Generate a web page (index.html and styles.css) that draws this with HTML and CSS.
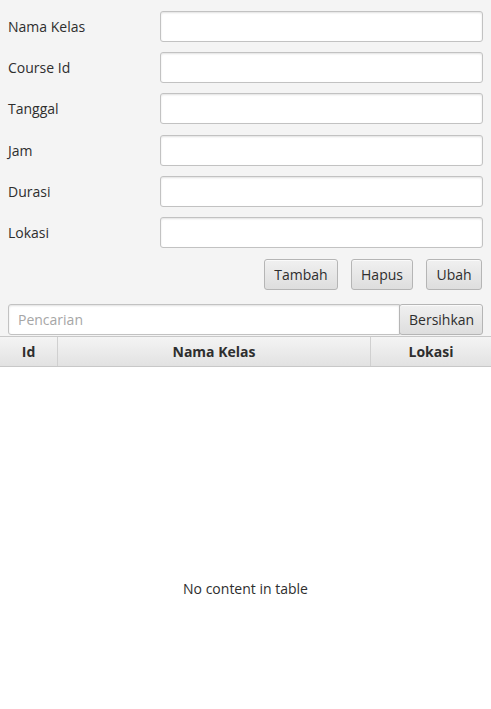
FILE: index.html
```html
<!DOCTYPE html>
<html>
<head>
<meta charset="utf-8">
<link rel="stylesheet" href="styles.css">
</head>
<body>
<div class="app">
  <div class="form">
    <label class="lbl">Nama Kelas</label><input class="field" type="text">
    <label class="lbl">Course Id</label><input class="field" type="text">
    <label class="lbl">Tanggal</label><input class="field" type="text">
    <label class="lbl">Jam</label><input class="field" type="text">
    <label class="lbl">Durasi</label><input class="field" type="text">
    <label class="lbl">Lokasi</label><input class="field" type="text">
  </div>
  <div class="actions">
    <button class="btn btn-tambah">Tambah</button>
    <button class="btn btn-hapus">Hapus</button>
    <button class="btn btn-ubah">Ubah</button>
  </div>
  <div class="search">
    <input class="field search-field" type="text" placeholder="Pencarian">
    <button class="btn btn-clear">Bersihkan</button>
  </div>
  <div class="table">
    <div class="thead">
      <div class="th th-id">Id</div>
      <div class="th th-nama">Nama Kelas</div>
      <div class="th th-lokasi">Lokasi</div>
    </div>
    <div class="tbody">
      <div class="empty">No content in table</div>
    </div>
  </div>
</div>
</body>
</html>
```
FILE: styles.css
```css
html, body {
  margin: 0;
  padding: 0;
  height: 100%;
}
body {
  background: #f4f4f4;
  font-family: "Open Sans", "Noto Sans", sans-serif;
  font-size: 14px;
  color: #2e2e2e;
}
.app {
  display: flex;
  flex-direction: column;
  height: 100%;
}
.form {
  display: grid;
  grid-template-columns: 152px 1fr;
  grid-auto-rows: 31px;
  row-gap: 10.2px;
  padding: 11px 8px 0 8px;
}
.lbl {
  display: flex;
  align-items: center;
  color: #2e2e2e;
}
.field {
  box-sizing: border-box;
  height: 31px;
  margin: 0;
  border: 1px solid #c2c2c2;
  border-radius: 3px;
  background: #fff;
  box-shadow: inset 0 1px 2px rgba(0,0,0,0.12);
  font-family: inherit;
  font-size: 14px;
  color: #2e2e2e;
  padding: 0 9px;
  outline: none;
}
.field::placeholder {
  color: #a6a6a6;
}
.actions {
  display: flex;
  justify-content: flex-end;
  gap: 13px;
  padding: 11px 9px 0 8px;
}
.btn {
  box-sizing: border-box;
  height: 31px;
  margin: 0;
  border: 1px solid #b5b5b5;
  border-radius: 3px;
  background: linear-gradient(#f0f0f0, #dedede);
  box-shadow: inset 0 1px 0 #fafafa;
  font-family: inherit;
  font-size: 14px;
  color: #2e2e2e;
  padding: 0 9px;
}
.btn-tambah { width: 74px; }
.btn-hapus { width: 62px; }
.btn-ubah { width: 56px; }
.search {
  display: flex;
  padding: 14px 8px 1px 8px;
}
.search-field {
  flex: 1;
  border-radius: 3px 0 0 3px;
}
.btn-clear {
  width: 84px;
  margin-left: -1px;
}
.table {
  flex: 1;
  display: flex;
  flex-direction: column;
  background: #fff;
}
.thead {
  display: grid;
  grid-template-columns: 58px 313px 1fr;
  height: 31px;
  background: linear-gradient(#f4f4f4, #e2e2e2);
  border-top: 1px solid #c8c8c8;
  border-bottom: 1px solid #c8c8c8;
  box-sizing: border-box;
}
.th {
  display: flex;
  align-items: center;
  justify-content: center;
  font-weight: bold;
  color: #2e2e2e;
  border-right: 1px solid #d0d0d0;
}
.th-lokasi { border-right: none; }
.tbody {
  flex: 1;
  display: flex;
  align-items: center;
  justify-content: center;
  padding-top: 102px;
}
.empty {
  color: #2e2e2e;
}
```
